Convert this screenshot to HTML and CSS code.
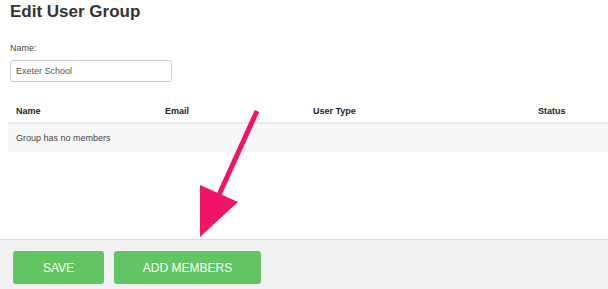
FILE: index.html
```html
<!DOCTYPE html>
<html>
<head>
<meta charset="utf-8">
<link rel="stylesheet" href="styles.css">
</head>
<body>
<div class="page">
  <main class="content">
    <h1 class="title">Edit User Group</h1>
    <label class="label" for="name">Name:</label>
    <input class="input" id="name" type="text" value="Exeter School">
    <table class="members">
      <colgroup>
        <col class="c1"><col class="c2"><col class="c3"><col class="c4">
      </colgroup>
      <thead>
        <tr><th>Name</th><th>Email</th><th>User Type</th><th>Status</th></tr>
      </thead>
      <tbody>
        <tr class="empty"><td colspan="4">Group has no members</td></tr>
      </tbody>
    </table>
  </main>
  <footer class="footer">
    <button class="btn btn-save">SAVE</button>
    <button class="btn btn-add">ADD MEMBERS</button>
  </footer>
  <svg class="arrow" width="608" height="289" viewBox="0 0 608 289">
    <line x1="257" y1="111" x2="218" y2="197" stroke="#ef1466" stroke-width="5"/>
    <polygon points="200,185 238,202 200,237" fill="#ef1466"/>
  </svg>
</div>
</body>
</html>
```
FILE: styles.css
```css
html, body {
  margin: 0;
  padding: 0;
  background: #fff;
}
body {
  font-family: "Liberation Sans", Arial, sans-serif;
  color: #333;
}
.page {
  position: relative;
  width: 608px;
  height: 289px;
  display: flex;
  flex-direction: column;
  overflow: hidden;
}
.content {
  flex: 1;
  padding: 0 0 0 8px;
}
.title {
  font-size: 17px;
  font-weight: bold;
  margin: 2px 0 0 2px;
  line-height: 20px;
  color: #333;
}
.label {
  display: block;
  font-size: 9px;
  color: #444;
  margin: 20px 0 0 2px;
  line-height: 12px;
}
.input {
  display: block;
  box-sizing: border-box;
  width: 162px;
  height: 22px;
  margin: 6px 0 0 2px;
  border: 1px solid #ccc;
  border-radius: 3px;
  padding: 0 5px;
  font-family: "Liberation Sans", Arial, sans-serif;
  font-size: 9px;
  color: #555;
  outline: none;
}
.members {
  width: 600px;
  border-collapse: collapse;
  table-layout: fixed;
  margin-top: 16px;
  font-size: 9px;
}
.c1 { width: 149px; }
.c2 { width: 148px; }
.c3 { width: 225px; }
.c4 { width: 78px; }
.members th {
  text-align: left;
  font-weight: bold;
  color: #222;
  padding: 7px 8px 5px;
  line-height: 12px;
  border-bottom: 2px solid #eaeaea;
}
.members td {
  padding: 8px 8px 8px;
  line-height: 12px;
  color: #444;
}
.empty {
  background: #f8f8f8;
}
.footer {
  background: #f2f2f2;
  border-top: 1px solid #dcdcdc;
  display: flex;
  align-items: flex-start;
  gap: 10px;
  padding: 11px 0 0 13px;
  box-sizing: border-box;
  height: 50px;
}
.btn {
  height: 33px;
  border: none;
  border-radius: 3px;
  background: #62c462;
  color: #fff;
  font-family: "Liberation Sans", Arial, sans-serif;
  font-size: 12px;
  padding: 0;
}
.btn-save { width: 91px; }
.btn-add { width: 147px; }
.arrow {
  position: absolute;
  left: 0;
  top: 0;
  pointer-events: none;
}
```
